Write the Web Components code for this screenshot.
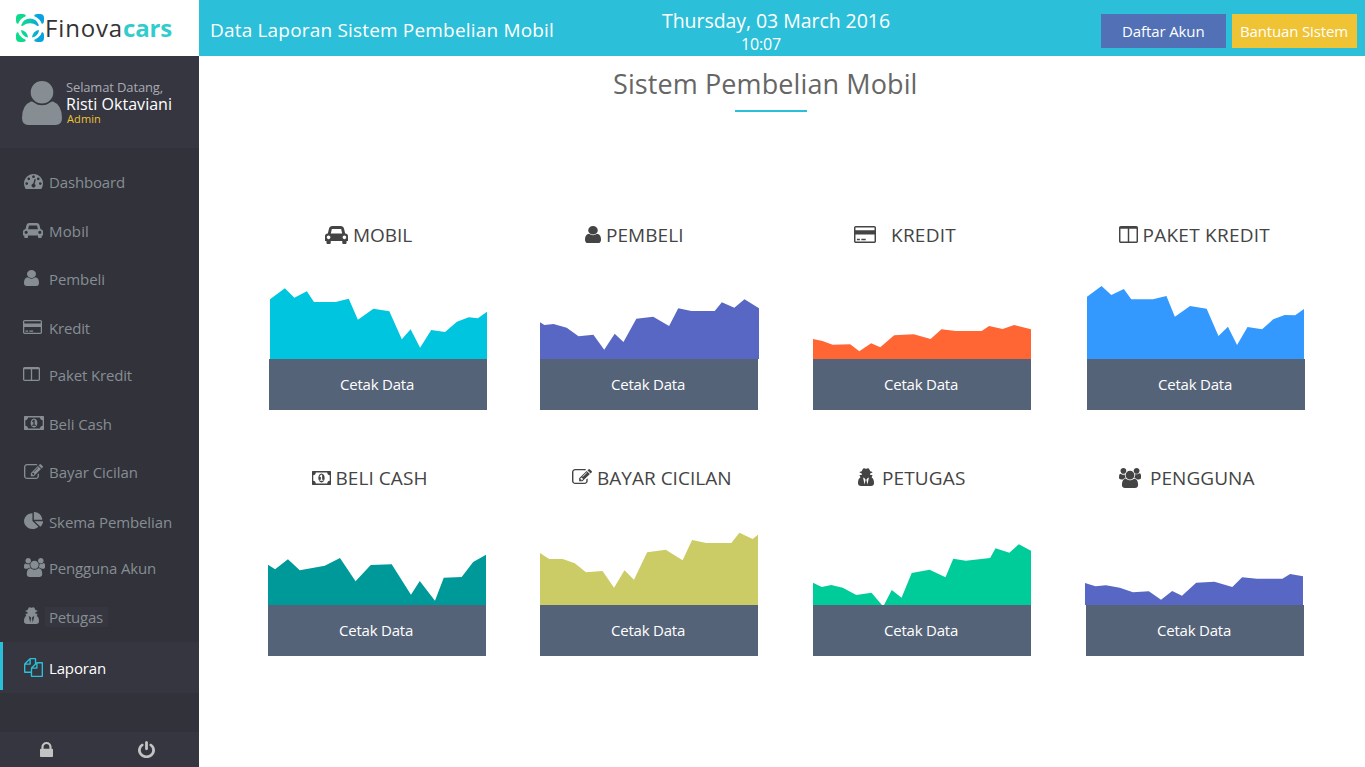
<!DOCTYPE html>
<html lang="id">
<head>
<meta charset="utf-8">
<title>Finovacars - Laporan</title>
<style>
html,body{margin:0;height:100%}
body{font-family:"Open Sans","Noto Sans",sans-serif;background:#fff;overflow:hidden}
</style>
</head>
<body>
<finova-app></finova-app>
<script>
const ICONS={
user:['256 128 1280 1536','M1536 1399q0 109-62.5 187t-150.5 78h-854q-88 0-150.5-78t-62.5-187q0-85 8.5-160.5t31.5-152 58.5-131 94-89 134.5-34.5q131 128 313 128t313-128q76 0 134.5 34.5t94 89 58.5 131 31.5 152 8.5 160.5zm-256-887q0 159-112.5 271.5t-271.5 112.5-271.5-112.5-112.5-271.5 112.5-271.5 271.5-112.5 271.5 112.5 112.5 271.5z'],
lock:['320 128 1152 1408','M640 768h512v-192q0-106-75-181t-181-75-181 75-75 181v192zm832 96v576q0 40-28 68t-68 28h-960q-40 0-68-28t-28-68v-576q0-40 28-68t68-28h32v-192q0-184 132-316t316-132 316 132 132 316v192h32q40 0 68 28t28 68z'],
power:['128 0 1536 1664','M1664 896q0 156-61 298t-164 245-245 164-298 61-298-61-245-164-164-245-61-298q0-182 80.5-343t226.5-270q43-32 95.5-25t83.5 50q32 42 24.5 94.5t-49.5 84.5q-98 74-151.5 181t-53.5 228q0 104 40.5 198.5t109.5 163.5 163.5 109.5 198.5 40.5 198.5-40.5 163.5-109.5 109.5-163.5 40.5-198.5q0-121-53.5-228t-151.5-181q-42-32-49.5-84.5t24.5-94.5q31-43 84-50t95 25q146 109 226.5 270t80.5 343zm-640-768v640q0 52-38 90t-90 38-90-38-38-90v-640q0-52 38-90t90-38 90 38 38 90z'],
car:['0 128 2048 1536','M480 1088q0-66-47-113t-113-47-113 47-47 113 47 113 113 47 113-47 47-113zm36-320h1016l-89-357q-2-8-14-17.5t-21-9.5h-768q-9 0-21 9.5t-14 17.5zm1372 320q0-66-47-113t-113-47-113 47-47 113 47 113 113 47 113-47 47-113zm160-96v384q0 14-9 23t-23 9h-96v128q0 80-56 136t-136 56-136-56-56-136v-128h-1024v128q0 80-56 136t-136 56-136-56-56-136v-128h-96q-14 0-23-9t-9-23v-384q0-93 65.5-158.5t158.5-65.5h28l105-419q23-94 104-157.5t179-63.5h768q98 0 179 63.5t104 157.5l105 419h28q93 0 158.5 65.5t65.5 158.5z'],
dash:['0 256 1792 1408','M384 1152q0-53-37.5-90.5t-90.5-37.5-90.5 37.5-37.5 90.5 37.5 90.5 90.5 37.5 90.5-37.5 37.5-90.5zm192-448q0-53-37.5-90.5t-90.5-37.5-90.5 37.5-37.5 90.5 37.5 90.5 90.5 37.5 90.5-37.5 37.5-90.5zm428 481l101-382q6-26-7.5-48.5t-38.5-29.5-48 6.5-30 39.5l-101 382q-60 5-107 43.5t-63 98.5q-20 77 20 146t117 89 146-20 89-117q16-60-6-117t-72-91zm660-33q0-53-37.5-90.5t-90.5-37.5-90.5 37.5-37.5 90.5 37.5 90.5 90.5 37.5 90.5-37.5 37.5-90.5zm-640-640q0-53-37.5-90.5t-90.5-37.5-90.5 37.5-37.5 90.5 37.5 90.5 90.5 37.5 90.5-37.5 37.5-90.5zm448 192q0-53-37.5-90.5t-90.5-37.5-90.5 37.5-37.5 90.5 37.5 90.5 90.5 37.5 90.5-37.5 37.5-90.5zm320 448q0 261-141 483-19 29-54 29h-1402q-35 0-54-29-141-221-141-483 0-182 71-348t191-286 286-191 348-71 348 71 286 191 191 286 71 348z'],
card:['0 128 1920 1536','M1760 128q66 0 113 47t47 113v1216q0 66-47 113t-113 47h-1600q-66 0-113-47t-47-113v-1216q0-66 47-113t113-47h1600zm-1600 128q-13 0-22.5 9.5t-9.5 22.5v224h1664v-224q0-13-9.5-22.5t-22.5-9.5h-1600zm1600 1280q13 0 22.5-9.5t9.5-22.5v-608h-1664v608q0 13 9.5 22.5t22.5 9.5h1600zm-1504-128v-128h256v128h-256zm384 0v-128h384v128h-384z'],
columns:['0 128 1664 1536','M160 1536h608v-1152h-640v1120q0 13 9.5 22.5t22.5 9.5zm1376-32v-1120h-640v1152h608q13 0 22.5-9.5t9.5-22.5zm128-1216v1216q0 66-47 113t-113 47h-1344q-66 0-113-47t-47-113v-1216q0-66 47-113t113-47h1344q66 0 113 47t47 113z'],
money:['0 256 1920 1280','M768 1152h384v-96h-128v-448h-114l-148 137 77 80q42-37 55-57h2v288h-128v96zm512-256q0 70-21 142t-59.5 134-101.5 101-138 39-138-39-101.5-101-59.5-134-21-142 21-142 59.5-134 101.5-101 138-39 138 39 101.5 101 59.5 134 21 142zm512 256v-512q-106 0-181-75t-75-181h-1152q0 106-75 181t-181 75v512q106 0 181 75t75 181h1152q0-106 75-181t181-75zm128-832v1152q0 26-19 45t-45 19h-1792q-26 0-45-19t-19-45v-1152q0-26 19-45t45-19h1792q26 0 45 19t19 45z'],
edit:['0 128 1792 1408','M888 1184l116-116-152-152-116 116v56h96v96h56zm440-720q-16-16-33 1l-350 350q-17 17-1 33t33-1l350-350q17-17 1-33zm80 594v190q0 119-84.5 203.5t-203.5 84.5h-832q-119 0-203.5-84.5t-84.5-203.5v-832q0-119 84.5-203.5t203.5-84.5h832q63 0 117 25 15 7 18 23 3 17-9 29l-49 49q-14 14-32 8-23-6-45-6h-832q-66 0-113 47t-47 113v832q0 66 47 113t113 47h832q66 0 113-47t47-113v-126q0-13 9-22l64-64q15-15 35-7t20 29zm-96-738l288 288-672 672h-288v-288zm444 132l-92 92-288-288 92-92q28-28 68-28t68 28l152 152q28 28 28 68t-28 68z'],
pie:['0 0 1728 1664','M768 890l546 546q-106 108-247.5 168t-298.5 60q-209 0-385.5-103t-279.5-279.5-103-385.5 103-385.5 279.5-279.5 385.5-103v762zm187 6h773q0 157-60 298.5t-168 247.5zm709-128h-768v-768q209 0 385.5 103t279.5 279.5 103 385.5z'],
users:['0 0 1920 1792','M593 896q-162 5-265 128h-134q-82 0-138-40.5t-56-118.5q0-353 124-353 6 0 43.5 21t97.5 42.5 119 21.5q67 0 133-23-5 37-5 66 0 159 93 293zm1071 637q0 120-73 189.5t-194 69.5h-874q-121 0-194-69.5t-73-189.5q0-53 3.5-103.5t14-109 26.5-108.5 43-97.5 62-81 85.5-53.5 111.5-20q10 0 43 21.5t73 48 107 48 135 21.5 135-21.5 107-48 73-48 43-21.5q61 0 111.5 20t85.5 53.5 62 81 43 97.5 26.5 108.5 14 109 3.5 103.5zm-1024-1277q0 106-75 181t-181 75-181-75-75-181 75-181 181-75 181 75 75 181zm704 384q0 159-112.5 271.5t-271.5 112.5-271.5-112.5-112.5-271.5 112.5-271.5 271.5-112.5 271.5 112.5 112.5 271.5zm576 225q0 78-56 118.5t-138 40.5h-134q-103-123-265-128 93-134 93-293 0-29-5-66 66 23 133 23 59 0 119-21.5t97.5-42.5 43.5-21q124 0 124 353zm-128-609q0 106-75 181t-181 75-181-75-75-181 75-181 181-75 181 75 75 181z'],
files:['0 0 1792 1792','M1696 384q40 0 68 28t28 68v1216q0 40-28 68t-68 28h-960q-40 0-68-28t-28-68v-288h-544q-40 0-68-28t-28-68v-672q0-40 20-88t48-76l408-408q28-28 76-48t88-20h416q40 0 68 28t28 68v328q68-40 128-40h416zm-544 213l-299 299h299v-299zm-640-384l-299 299h299v-299zm196 647l316-316v-416h-384v416q0 40-28 68t-68 28h-416v640h512v-256q0-40 20-88t48-76zm956 804v-1152h-384v416q0 40-28 68t-68 28h-416v640h896z'],
secret:['128 0 1408 1682','M704 1536l96-448-96-128-128-64zm256 0l128-640-128 64-96 128zm160-992q-2 4-4 6-10 8-96 8-70 0-167-19-7-2-21-2t-21 2q-97 19-167 19-86 0-96-8-2-2-4-6 2-18 4-27 2-3 7.5-6.5t7.5-10.5q2-4 7.5-20.5t7-20.5 7.5-17 8.5-17 9-14 12-13.5 14-9.5 17.5-8 20.5-4 24.5-2q36 0 59 12.5t32.5 30 14.5 34.5 11.5 29.5 17.5 12.5h12q11 0 17.5-12.5t11.5-29.5 14.5-34.5 32.5-30 59-12.5q13 0 24.5 2t20.5 4 17.5 8 14 9.5 12 13.5 9 14 8.5 17 7.5 17 7 20.5 7.5 20.5q2 7 7.5 10.5t7.5 6.5q2 9 4 27zm416 879q0 121-73 190t-194 69h-874q-121 0-194-69t-73-190q0-61 4.5-118t19-125.5 37.5-123.5 63.5-103.5 93.5-74.5l-90-220h214q-22-64-22-128 0-12 2-32-194-40-194-96 0-57 210-99 17-62 51.5-134t70.5-114q32-37 76-37 30 0 84 31t84 31 84-31 84-31q44 0 76 37 36 42 70.5 114t51.5 134q210 42 210 99 0 56-194 96 7 81-20 160h214l-82 225q63 33 107.5 96.5t65.5 143.5 29 151.5 8 157.5z'],
avatar:['0 0 40 44','M20 0a11 11 0 1 1 0 22.6a11 11 0 1 1 0-22.6zM9 20.5q2 0 3.2 1.2q3.300 2.600 7.800 2.600t7.800-2.600q1.200-1.200 3.200-1.200q9 3.500 9 16.500q0 7-6.500 7h-27q-6.500 0-6.500-7q0-13 9-16.500z']
};
const shadow=(el,html)=>{el.attachShadow({mode:'open'}).innerHTML=html};

/* <ui-icon name w h>: a glyph stretched to a box of w by h pixels */
class UiIcon extends HTMLElement{
  connectedCallback(){
    if(this.shadowRoot)return;
    const [vb,d]=ICONS[this.getAttribute('name')];
    const w=this.getAttribute('w'),h=this.getAttribute('h');
    shadow(this,`<style>:host{display:block;flex:none;width:${w}px;height:${h}px}svg{display:block}</style>
    <svg width="${w}" height="${h}" viewBox="${vb}" preserveAspectRatio="none"><path fill="currentColor" d="${d}"/></svg>`);
  }
}
customElements.define('ui-icon',UiIcon);

/* <ui-text w>: one line of text tracked to an advance width of w pixels */
class UiText extends HTMLElement{
  connectedCallback(){
    if(this.shadowRoot)return;
    shadow(this,`<style>:host{display:block;flex:none;white-space:nowrap}span{display:block;width:max-content;white-space:nowrap}</style><span><slot></slot></span>`);
    const w=parseFloat(this.getAttribute('w'));
    if(!w)return;
    const s=this.shadowRoot.querySelector('span');
    const n=this.textContent.length;
    s.style.letterSpacing=((w-s.getBoundingClientRect().width)/n).toFixed(3)+'px';
  }
}
customElements.define('ui-text',UiText);

class FinovaLogo extends HTMLElement{
  connectedCallback(){
    shadow(this,`<style>
    :host{display:flex;box-sizing:border-box;width:199px;height:56px;background:#fff;padding:14px 0 0 16px}
    svg{display:block;flex:none}
    ui-text{font-size:24px;line-height:30px;margin-top:-1px;color:#333}
    .a{margin-left:1px}.b{font-weight:700;color:#33cccc}
    </style>
    <svg width="28" height="28" viewBox="0 0 28 28">
      <defs><linearGradient id="g" x1="0" x2="28" y1="0" y2="0" gradientUnits="userSpaceOnUse"><stop offset=".2" stop-color="#0edb8b"/><stop offset=".5" stop-color="#10c4b4"/><stop offset=".8" stop-color="#06a3e0"/></linearGradient></defs>
      <g fill="url(#g)">
      <path d="M0 4Q0 0 4 0H7Q9.500 0 10 2Q4 4.500 2 10Q0 9.500 0 7z"/>
      <path d="M28 4Q28 0 24 0H21Q18.500 0 18 2Q24 4.500 26 10Q28 9.500 28 7z"/>
      <path d="M0 24Q0 28 4 28H7Q9.500 28 10 26Q4 23.500 2 18Q0 18.500 0 21z"/>
      <path d="M28 24Q28 28 24 28H21Q18.500 28 18 26Q24 23.500 26 18Q28 18.500 28 21z"/>
      <path d="M5 11.500Q7.500 4.500 14 4.500T23 11.500Q21.500 12.500 20 11Q18 9.200 14 9.200T8 11Q6.500 12.500 5 11.500z"/>
      <path d="M4.800 16Q8 16 10 18.500T12 23.500Q6 22.500 4.800 16z"/>
      <path d="M23.200 16Q20 16 18 18.500T16 23.500Q22 22.500 23.200 16z"/>
      </g>
    </svg><ui-text class="a" w="78">Finova</ui-text><ui-text class="b" w="49">cars</ui-text>`);
  }
}
customElements.define('finova-logo',FinovaLogo);

class UserPanel extends HTMLElement{
  connectedCallback(){
    shadow(this,`<style>
    :host{display:flex;box-sizing:border-box;height:92px;background:#363640;padding:25px 0 0 22px;color:#868e93}
    .t{margin:-2px 0 0 4px}
    .s{font-size:13px;line-height:16px;color:#a9abb2}
    .n{font-size:16px;line-height:19px;color:#fff}
    .r{font-size:11px;line-height:12px;color:#efc334;margin-left:1px;margin-top:-1px}
    </style><ui-icon name="avatar" w="40" h="44"></ui-icon>
    <div class="t"><ui-text class="s" w="97">Selamat Datang,</ui-text><ui-text class="n" w="106">Risti Oktaviani</ui-text><ui-text class="r" w="34">Admin</ui-text></div>`);
  }
}
customElements.define('user-panel',UserPanel);

class NavItem extends HTMLElement{
  connectedCallback(){
    const g=k=>this.getAttribute(k);
    shadow(this,`<style>
    :host{display:block;color:#868e93;font-size:15px;line-height:20px}
    :host([active]){background:linear-gradient(#2bbfd9,#2bbfd9) 0 0/3px 48px no-repeat #363640;padding:16px 0 15px;margin-top:-16px;height:20px;color:#2bc0da}
    .r{display:flex;align-items:flex-start;padding-left:23px}
    .i{flex:none;width:26px;padding:${g('dy')}px 0 0 ${g('dx')}px;box-sizing:border-box}
    :host([active]) ui-text{color:#fff}
    :host([marked]) ui-text{background:#363640;padding:0 5px 0 4px;margin-left:-4px}
    </style><div class="r"><div class="i"><ui-icon name="${g('icon')}" w="${g('iw')}" h="${g('ih')}"></ui-icon></div><ui-text w="${g('w')}">${g('label')}</ui-text></div>`);
  }
}
customElements.define('nav-item',NavItem);

class SideBar extends HTMLElement{
  connectedCallback(){
    const items=[
     ['Dashboard','dash',1,2,19,15,76],['Mobil','car',0,2,20,15,40],['Pembeli','user',1,1,15,16,56],
     ['Kredit','card',0,2,19,14,41],['Paket Kredit','columns',0,2,17,14,83],['Beli Cash','money',1,2,20,14,63],
     ['Bayar Cicilan','edit',1,2,19,15,89],['Skema Pembelian','pie',1,0,19,17,123],['Pengguna Akun','users',1,0,21,19,107],
     ['Petugas','secret',1,0,15,17,54,'marked'],['Laporan','files',1,0,19,19,57,'active']];
    shadow(this,`<style>
    :host{display:flex;flex-direction:column;width:199px;height:767px;background:#32323a}
    nav{display:grid;flex:1;padding-top:24px;align-content:start;grid-template-rows:49px 48px 49px 47px 49px 48px 50px 46px 49px 51px 20px}
    nav>*{align-self:start}
    footer{display:flex;height:35px;background:#363640;color:#c3c3c3}
    footer ui-icon:first-child{margin:10px 0 0 40px}footer ui-icon+ui-icon{margin:9px 0 0 85px}
    </style><finova-logo></finova-logo><user-panel></user-panel>
    <nav>${items.map(i=>`<nav-item label="${i[0]}" icon="${i[1]}" dx="${i[2]}" dy="${i[3]}" iw="${i[4]}" ih="${i[5]}" w="${i[6]}" ${i[7]||''}></nav-item>`).join('')}</nav>
    <footer><ui-icon name="lock" w="13" h="15"></ui-icon><ui-icon name="power" w="17" h="17"></ui-icon></footer>`);
  }
}
customElements.define('side-bar',SideBar);

class TopBar extends HTMLElement{
  connectedCallback(){
    shadow(this,`<style>
    :host{display:flex;box-sizing:border-box;height:56px;background:#2bbfd9;color:#fff;padding-left:11px}
    .t{font-size:19px;line-height:26px;margin-top:17px;width:452px}
    .c{width:439px;margin-top:8px}
    .d{font-size:19.500px;line-height:26px}.h{font-size:16px;line-height:22px;margin:-1px 0 0 79px}
    .b{display:flex;gap:6px;margin-top:14px}
    .b div{width:125px;height:34px;box-sizing:border-box;font-size:15px;line-height:20px;padding:7px 0 0 21px;background:#5170b6}
    .b div+div{background:#efc334;padding-left:8px}
    </style><div class="t"><ui-text w="344">Data Laporan Sistem Pembelian Mobil</ui-text></div>
    <div class="c"><ui-text class="d" w="228">Thursday, 03 March 2016</ui-text><ui-text class="h" w="40">10:07</ui-text></div>
    <div class="b"><div><ui-text w="82.500">Daftar Akun</ui-text></div><div><ui-text w="108">Bantuan Sistem</ui-text></div></div>`);
  }
}
customElements.define('top-bar',TopBar);

/* One report: title with icon, area chart, print button */
class ReportCard extends HTMLElement{
  set data(c){
    shadow(this,`<style>
    :host{display:block;width:218px;color:#444}
    .t{display:flex;align-items:flex-start;height:${c.th}px;font-size:19px;line-height:26px;padding-left:${c.ix}px}
    .t ui-icon{margin:${c.iy}px ${c.gap}px 0 0}
    svg{display:block;overflow:visible}
    .b{height:51px;box-sizing:border-box;background:#556378;color:#fff;font-size:15px;line-height:20px;padding:15px 0 0 71px}
    </style><div class="t"><ui-icon name="${c.icon}" w="${c.iw}" h="${c.ih}"></ui-icon><ui-text w="${c.tw}">${c.title}</ui-text></div>
    <svg width="218" height="75" viewBox="${c.vb}" preserveAspectRatio="none"><polygon fill="${c.color}" points="${c.pts}"/></svg>
    <div class="b"><ui-text w="74">Cetak Data</ui-text></div>`);
  }
}
customElements.define('report-card',ReportCard);

const CARDS=[
{title:'MOBIL',icon:'car',iw:23,ih:18,ix:56,iy:4,gap:5,tw:59,th:62,color:'#00c5de',vb:'56 222 645 225',pts:'59,447 59,268 103,235 131,263 168,244 189,276 253,276 292,266 319,329 365,296 412,304 449,388 475,358 503,413 536,360 577,366 612,335 647,322 674,325 701,305 701,447'},
{title:'PEMBELI',icon:'user',iw:16,ih:17,ix:45,iy:4,gap:5,tw:77.5,th:62,color:'#5867c3',vb:'858 222 645 225',pts:'858,447 858,337 871,345 898,342 937,353 972,379 1016,374 1048,419 1079,371 1105,396 1143,326 1193,320 1240,348 1267,295 1306,303 1375,303 1396,277 1433,293 1463,268 1506,295 1506,447'},
{title:'KREDIT',icon:'card',iw:22,ih:17,ix:41,iy:4,gap:15,tw:65,th:62,color:'#ff6633',vb:'68 222 645 225',pts:'68,447 68,387 96,393 126,404 178,403 205,424 240,400 267,412 308,376 366,373 416,387 448,358 490,363 567,363 589,348 629,357 663,345 713,358 713,447'},
{title:'PAKET KREDIT',icon:'columns',iw:19,ih:17,ix:32,iy:4,gap:4.5,tw:127.5,th:62,color:'#3399ff',vb:'879 222 645 225',pts:'879,447 879,260 922,228 951,255 988,237 1010,268 1074,268 1114,258 1139,320 1184,288 1233,296 1268,378 1296,350 1323,405 1354,351 1397,358 1430,328 1464,315 1495,316 1521,297 1521,447'},
{title:'BELI CASH',icon:'money',iw:19,ih:14,ix:44,iy:6,gap:4.5,tw:92,th:65,color:'#009999',vb:'53 225 645 225',pts:'53,450 53,329 74,343 112,313 147,346 221,332 266,309 312,379 357,330 419,328 476,419 502,378 547,437 573,368 626,366 660,321 698,299 698,450'},
{title:'BAYAR CICILAN',icon:'edit',iw:20,ih:15,ix:32,iy:4,gap:5,tw:134.5,th:65,color:'#cccc66',vb:'858 225 645 225',pts:'858,450 858,294 885,312 925,312 961,325 994,352 1043,348 1077,398 1108,346 1136,374 1175,292 1230,284 1280,316 1308,255 1350,264 1424,264 1448,233 1487,252 1503,239 1503,450'},
{title:'PETUGAS',icon:'secret',iw:16,ih:18,ix:45,iy:3,gap:8,tw:83.5,th:65,color:'#00cc99',vb:'68 225 645 225',pts:'68,450 68,383 94,396 122,390 156,398 196,420 241,413 272,450 278,450 301,405 330,428 360,354 413,344 460,367 483,311 520,317 592,309 608,280 649,293 677,268 713,287 713,450'},
{title:'PENGGUNA',icon:'users',iw:22,ih:20,ix:33,iy:3,gap:9,tw:104.5,th:65,color:'#5867c3',vb:'876 225 645 225',pts:'873,450 873,384 904,394 935,391 976,398 1015,412 1062,409 1098,434 1131,408 1160,422 1202,383 1256,380 1309,396 1338,367 1382,371 1457,371 1480,357 1518,364 1518,450'}];

class ReportBoard extends HTMLElement{
  connectedCallback(){
    shadow(this,`<style>
    :host{display:block}
    header{display:flex;flex-direction:column;height:166px}
    header ui-text{font-size:27px;line-height:36px;margin:10px 0 0 414px;color:#666}
    hr{width:72px;height:2px;border:0;background:#2bbfd9;margin:8px 0 0 536px}
    .row{display:grid;height:243px}
    .row.one{grid-template-columns:271px 273px 274px 218px;margin-left:70px}
    .row.two{grid-template-columns:272px 273px 273px 218px;margin-left:69px}
    </style><header><ui-text w="304.500">Sistem Pembelian Mobil</ui-text><hr></header>
    <div class="row one"></div><div class="row two"></div>`);
    const rows=this.shadowRoot.querySelectorAll('.row');
    CARDS.forEach((c,i)=>{const e=document.createElement('report-card');e.data=c;rows[i>>2].append(e)});
  }
}
customElements.define('report-board',ReportBoard);

class FinovaApp extends HTMLElement{
  connectedCallback(){
    shadow(this,`<style>:host{display:grid;grid-template-columns:199px 1fr;width:1365px;height:767px}</style>
    <side-bar></side-bar><main><top-bar></top-bar><report-board></report-board></main>`);
  }
}
customElements.define('finova-app',FinovaApp);
</script>
</body>
</html>
